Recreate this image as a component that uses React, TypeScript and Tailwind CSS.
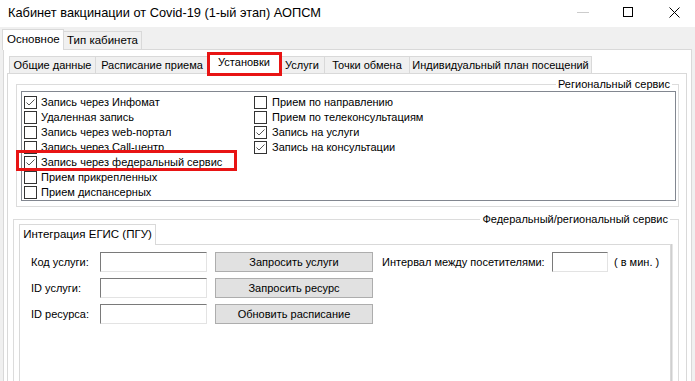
import React from 'react';

const FONT = "font-['Liberation_Sans',Arial,sans-serif]";

function CheckBox({ checked }: { checked?: boolean }) {
  return (
    <span className="w-[13px] h-[13px] border border-[#333333] bg-white flex items-center justify-center shrink-0">
      {checked && (
        <svg width="11" height="11" viewBox="0 0 11 11">
          <path d="M1.5 5.5 L4 8 L9.5 2.5" fill="none" stroke="#555555" strokeWidth="1" />
        </svg>
      )}
    </span>
  );
}

function Item({ label, checked, gap = 'ml-[4px]' }: { label: string; checked?: boolean; gap?: string }) {
  return (
    <div className="h-[15px] flex items-center whitespace-nowrap">
      <CheckBox checked={checked} />
      <span className={gap}>{label}</span>
    </div>
  );
}

const col1 = [
  { label: 'Запись через Инфомат', checked: true },
  { label: 'Удаленная запись' },
  { label: 'Запись через web-портал' },
  { label: 'Запись через Call-центр' },
  { label: 'Запись через федеральный сервис', checked: true },
  { label: 'Прием прикрепленных' },
  { label: 'Прием диспансерных' },
];

const col2 = [
  { label: 'Прием по направлению' },
  { label: 'Прием по телеконсультациям' },
  { label: 'Запись на услуги', checked: true },
  { label: 'Запись на консультации', checked: true },
];

const topTabs = [
  { label: 'Общие данные', w: 'w-[87px]' },
  { label: 'Расписание приема', w: 'w-[113px]' },
  { label: 'Установки', w: 'w-[71px]', active: true },
  { label: 'Услуги', w: 'w-[45px]' },
  { label: 'Точки обмена', w: 'w-[85px]' },
  { label: 'Индивидуальный план посещений', w: 'w-[182px]' },
];

function Field() {
  return <div className="h-[20px] w-[107px] bg-white border border-t-[#7a7a7a] border-l-[#7a7a7a] border-b-[#e3e3e3] border-r-[#e3e3e3]" />;
}

function Btn({ children }: { children: React.ReactNode }) {
  return (
    <div className="ml-[8px] h-[20px] w-[158px] bg-[#e1e1e1] border border-[#adadad] flex items-center justify-center whitespace-nowrap">
      {children}
    </div>
  );
}

export default function App() {
  return (
    <div className="w-[695px] h-[381px] overflow-hidden">
      <div className={`${FONT} w-[695px] h-[430px] bg-[#f0f0f0] text-black text-[11px] leading-[13px] flex flex-col`}>
        {/* title bar */}
        <div className="h-[27px] bg-white flex items-center shrink-0">
          <span className="pl-[8px] text-[12.8px] leading-[15px] -mt-[3px]">Кабинет вакцинации от Covid-19 (1-ый этап) АОПСМ</span>
          <div className="ml-auto flex items-center mr-[15px] -mt-[3px]">
            <div className="w-[12px] h-px bg-[#cccccc]" />
            <div className="ml-[34px] w-[10px] h-[10px] border border-black" />
            <svg className="ml-[36px]" width="11" height="11" viewBox="0 0 11 11">
              <path d="M0.5 0.5 L10.5 10.5 M10.5 0.5 L0.5 10.5" stroke="#000" strokeWidth="1" />
            </svg>
          </div>
        </div>

        {/* first tab row */}
        <div className="h-[22px] flex items-end pl-[2px] shrink-0">
          <div className="relative z-10 -mb-px h-[21px] w-[62px] bg-white border-l border-t border-r border-[#d9d9d9] flex items-center pl-[4px] pb-[2px] text-[11.5px]">
            Основное
          </div>
          <div className="h-[18px] w-[78px] border-t border-r border-[#d9d9d9] flex items-center justify-center text-[11.5px]">
            Тип кабинета
          </div>
        </div>

        {/* outer panel */}
        <div className="flex-1 mx-[3px] border border-[#d9d9d9] bg-white pl-[3px] pr-[4px] pt-[3px] flex flex-col">
          <div className="h-[20px] flex items-end pl-[2px] shrink-0">
            {topTabs.map((t, i) =>
              t.active ? (
                <div key={t.label} className={`relative z-10 -mb-px h-[21px] ${t.w} bg-white border-t border-r border-[#d9d9d9] flex items-center justify-center pb-[3px]`}>
                  {t.label}
                  <div className="absolute -left-[2px] -top-[2px] w-[75px] h-[24px] border-[3px] border-[#e81414]" />
                </div>
              ) : (
                <div key={t.label} className={`h-[17px] ${t.w} bg-[#f0f0f0] border-t border-r ${i === 0 ? 'border-l' : ''} border-[#d9d9d9] flex items-center justify-center whitespace-nowrap`}>
                  {t.label}
                </div>
              )
            )}
          </div>

          {/* inner panel */}
          <div className="flex-1 border border-[#d9d9d9] bg-white flex flex-col">
            {/* regional groupbox */}
            <div className="relative mt-[10px] ml-[8px] mr-[7px] h-[123px] border border-[#dcdcdc] pl-[4px] pr-[2px] pt-[6px] pb-[4px] shrink-0">
              <span className="absolute right-[6px] -top-[7px] px-[2px] bg-white">Региональный сервис</span>
              <div className="relative h-[110px] border border-[#828790] bg-white pl-[2px] pt-[3px] flex">
                <div className="w-[230px]">
                  {col1.map((it) => (
                    <Item key={it.label} label={it.label} checked={it.checked} />
                  ))}
                </div>
                <div>
                  {col2.map((it) => (
                    <Item key={it.label} label={it.label} checked={it.checked} gap="ml-[5px]" />
                  ))}
                </div>
                <div className="absolute -left-[6px] top-[58px] w-[221px] h-[21px] border-[3px] border-[#e81414]" />
              </div>
            </div>

            {/* federal groupbox */}
            <div className="relative flex-1 mt-[12px] ml-[5px] mr-[7px] border border-[#dcdcdc] flex flex-col">
              <span className="absolute right-[8px] -top-[7px] px-[2px] bg-white">Федеральный/региональный сервис</span>
              <div className="mt-[4px] ml-[5px] h-[20px] flex items-end shrink-0">
                <div className="relative z-10 -mb-px h-[21px] w-[137px] bg-white border-l border-t border-r border-[#d9d9d9] flex items-center justify-center pb-[1px] text-[11.5px]">
                  Интеграция ЕГИС (ПГУ)
                </div>
              </div>
              <div className="flex-1 ml-[5px] mr-[7px] border border-[#d9d9d9] bg-white shadow-[1px_0_0_#cfcfcf,2px_0_0_#e6e6e6] pt-[7px] pl-[11px] flex flex-col gap-[6px]">
                <div className="flex items-center h-[20px]">
                  <span className="w-[69px]">Код услуги:</span>
                  <Field />
                  <Btn>Запросить услуги</Btn>
                  <span className="ml-[9px] w-[170px] whitespace-nowrap">Интервал между посетителями:</span>
                  <div className="h-[20px] w-[56px] bg-white border border-t-[#7a7a7a] border-l-[#7a7a7a] border-b-[#e3e3e3] border-r-[#e3e3e3]" />
                  <span className="ml-[6px] whitespace-nowrap">( в мин. )</span>
                </div>
                <div className="flex items-center h-[20px]">
                  <span className="w-[69px]">ID услуги:</span>
                  <Field />
                  <Btn>Запросить ресурс</Btn>
                </div>
                <div className="flex items-center h-[20px]">
                  <span className="w-[69px]">ID ресурса:</span>
                  <Field />
                  <Btn>Обновить расписание</Btn>
                </div>
              </div>
            </div>
          </div>
        </div>
      </div>
    </div>
  );
}
